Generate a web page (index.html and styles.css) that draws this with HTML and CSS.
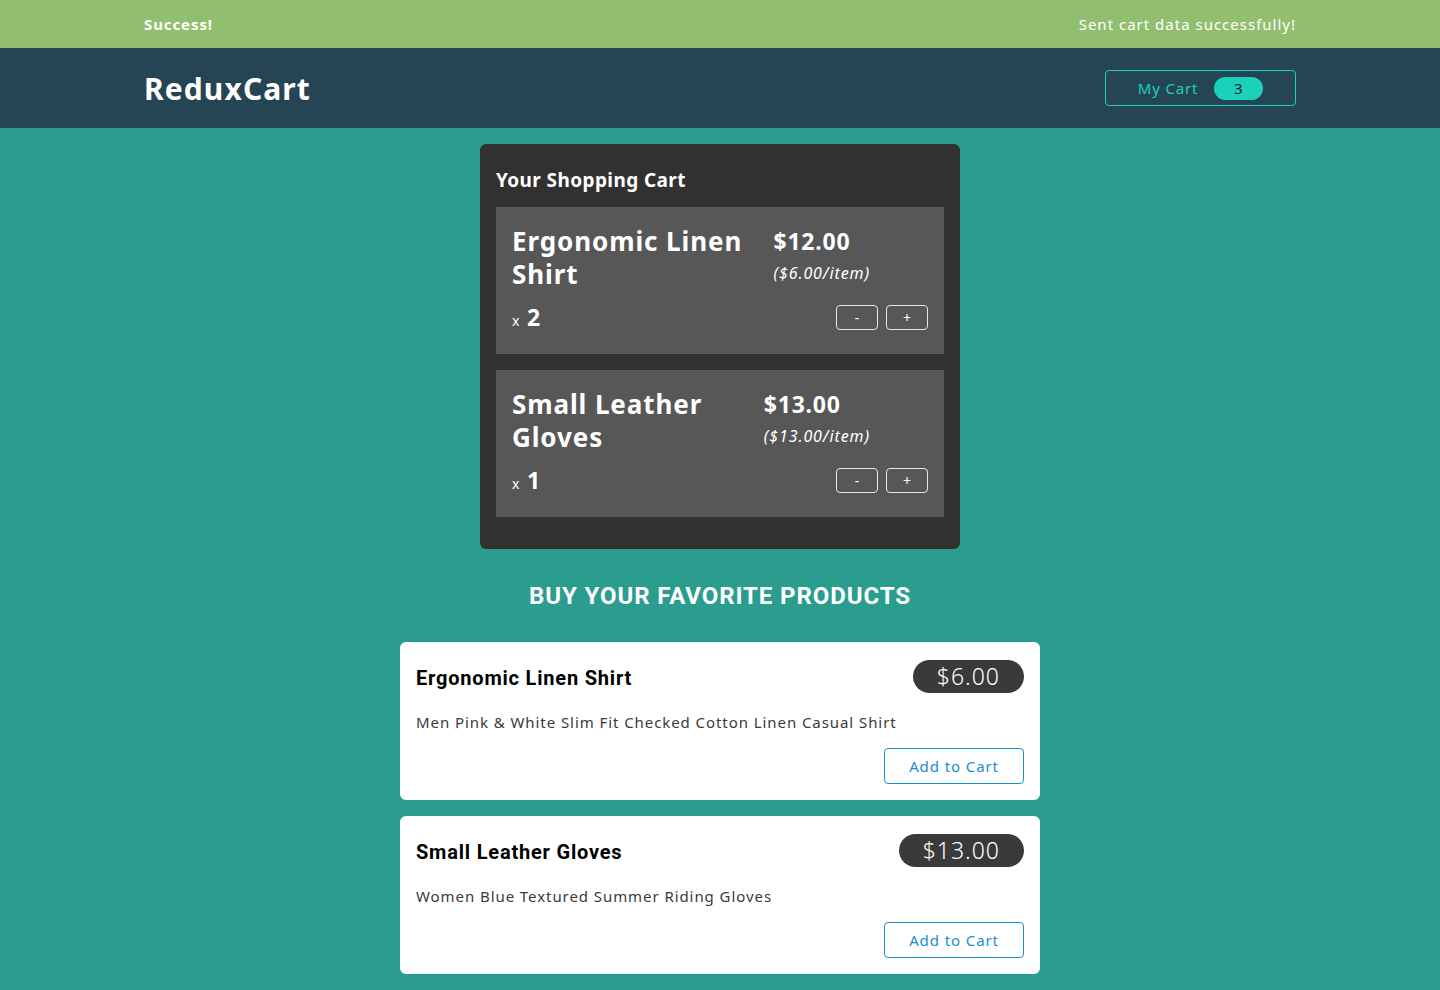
FILE: index.html
```html
<!DOCTYPE html>
<html lang="en">
<head>
<meta charset="utf-8">
<title>ReduxCart</title>
<link rel="stylesheet" href="styles.css">
</head>
<body>
<section class="notification">
  <h2 class="notification-title">Success!</h2>
  <p class="notification-msg">Sent cart data successfully!</p>
</section>
<header class="header">
  <h1 class="logo">ReduxCart</h1>
  <nav>
    <button class="cart-button"><span>My Cart</span><span class="badge">3</span></button>
  </nav>
</header>
<main class="main">
  <section class="cart">
    <h2 class="cart-title">Your Shopping Cart</h2>
    <ul class="cart-list">
      <li class="cart-item">
        <div class="item-top">
          <h3 class="item-name">Ergonomic Linen Shirt</h3>
          <div class="item-price">$12.00 <span class="item-unit">($6.00/item)</span></div>
        </div>
        <div class="item-bottom">
          <div class="item-qty">x <span>2</span></div>
          <div class="item-actions">
            <button class="qty-btn">-</button>
            <button class="qty-btn">+</button>
          </div>
        </div>
      </li>
      <li class="cart-item">
        <div class="item-top">
          <h3 class="item-name">Small Leather Gloves</h3>
          <div class="item-price">$13.00 <span class="item-unit">($13.00/item)</span></div>
        </div>
        <div class="item-bottom">
          <div class="item-qty">x <span>1</span></div>
          <div class="item-actions">
            <button class="qty-btn">-</button>
            <button class="qty-btn">+</button>
          </div>
        </div>
      </li>
    </ul>
  </section>
  <section class="products">
    <h2 class="products-title">Buy your favorite products</h2>
    <ul class="product-list">
      <li class="product">
        <div class="product-head">
          <h3 class="product-name">Ergonomic Linen Shirt</h3>
          <div class="product-price">$6.00</div>
        </div>
        <p class="product-desc">Men Pink &amp; White Slim Fit Checked Cotton Linen Casual Shirt</p>
        <div class="product-actions"><button class="add-btn">Add to Cart</button></div>
      </li>
      <li class="product">
        <div class="product-head">
          <h3 class="product-name">Small Leather Gloves</h3>
          <div class="product-price">$13.00</div>
        </div>
        <p class="product-desc">Women Blue Textured Summer Riding Gloves</p>
        <div class="product-actions"><button class="add-btn">Add to Cart</button></div>
      </li>
    </ul>
  </section>
</main>
</body>
</html>
```
FILE: styles.css
```css
* { box-sizing: border-box; }
body {
  margin: 0;
  font-family: "Noto Sans", "Open Sans", sans-serif;
  background: #2a9d8f;
  color: #fff;
}
h1, h2, h3, p, ul { margin: 0; padding: 0; }
ul { list-style: none; }
button { font-family: inherit; cursor: pointer; }

.notification {
  height: 48px;
  background: #92bf6f;
  display: flex;
  justify-content: space-between;
  align-items: center;
  padding: 0 10%;
}
.notification-title { font-size: 15px; font-weight: 700; letter-spacing: 0.9px; }
.notification-msg { font-size: 15px; letter-spacing: 1px; }

.header {
  height: 80px;
  background: #254554;
  display: flex;
  justify-content: space-between;
  align-items: center;
  padding: 0 10%;
}
.logo { font-size: 30px; font-weight: 700; letter-spacing: 1.1px; }
.cart-button {
  width: 191px;
  height: 36px;
  background: transparent;
  border: 1px solid #1ad1b9;
  border-radius: 4px;
  color: #1ad1b9;
  font-size: 15px;
  letter-spacing: 0.85px;
  display: flex;
  align-items: center;
  justify-content: center;
  gap: 16px;
  padding: 0;
}
.badge {
  background: #1ad1b9;
  color: #1d1d1d;
  border-radius: 12px;
  width: 49px;
  height: 23px;
  display: flex;
  align-items: center;
  justify-content: center;
  font-size: 15px;
}

.main { padding: 16px 0 40px; }

.cart {
  width: 480px;
  margin: 0 auto;
  background: #313131;
  border-radius: 6px;
  padding: 16px;
}
.cart-title { font-size: 19px; font-weight: 700; letter-spacing: 0.4px; margin: 7px 0 14px; }
.cart-list { display: flex; flex-direction: column; gap: 16px; padding-bottom: 16px; }
.cart-item {
  background: #575757;
  padding: 18px 16px 21px;
  height: 147px;
  display: flex;
  flex-direction: column;
  justify-content: space-between;
}
.item-top { display: flex; justify-content: space-between; gap: 30px; }
.item-name { font-size: 26px; font-weight: 700; line-height: 33px; letter-spacing: 0.9px; }
.item-price { font-size: 23px; font-weight: 700; line-height: 36px; margin-top: -2px; margin-right: 58px; letter-spacing: 0.8px; flex-shrink: 0; }
.item-unit { display: block; font-size: 16px; font-weight: 400; font-style: italic; line-height: 20px; margin-top: 4px; letter-spacing: 0.9px; }
.item-bottom { display: flex; justify-content: space-between; align-items: center; }
.item-qty { font-size: 14px; word-spacing: 4px; }
.item-qty span { font-size: 23px; font-weight: 700; }
.item-actions { display: flex; gap: 8px; }
.qty-btn {
  width: 42px;
  height: 25px;
  background: transparent;
  border: 1px solid #e8e8e8;
  border-radius: 4px;
  color: #fff;
  font-size: 14px;
  padding: 0;
}

.products { width: 640px; margin: 0 auto; }
.products-title {
  text-align: center;
  text-transform: uppercase;
  font-family: "Roboto", sans-serif;
  font-size: 24px;
  line-height: 28px;
  font-weight: 700;
  letter-spacing: 0.9px;
  margin: 33px 0 32px;
}
.product-list { display: flex; flex-direction: column; gap: 16px; }
.product {
  background: #fff;
  border-radius: 6px;
  padding: 16px;
  color: #1d1d1d;
}
.product-head { display: flex; justify-content: space-between; align-items: center; height: 36px; }
.product-name { font-family: "Roboto", sans-serif; font-size: 20px; font-weight: 700; letter-spacing: 0.8px; color: #000; margin-top: 4px; }
.product-price {
  background: #3a3a3a;
  color: #fff;
  border-radius: 20px;
  height: 33px;
  padding: 0 24px;
  font-size: 23px;
  font-weight: 300;
  letter-spacing: 1px;
  display: flex;
  align-items: center;
}
.product-desc { font-size: 15px; color: #3a3a3a; margin-top: 18px; line-height: 20px; letter-spacing: 0.93px; }
.product-actions { display: flex; justify-content: flex-end; margin-top: 16px; }
.add-btn {
  width: 140px;
  height: 36px;
  background: #fff;
  border: 1px solid #1a8ed1;
  border-radius: 4px;
  color: #1a8ed1;
  font-size: 15px;
  letter-spacing: 0.9px;
  padding: 0;
}
```
